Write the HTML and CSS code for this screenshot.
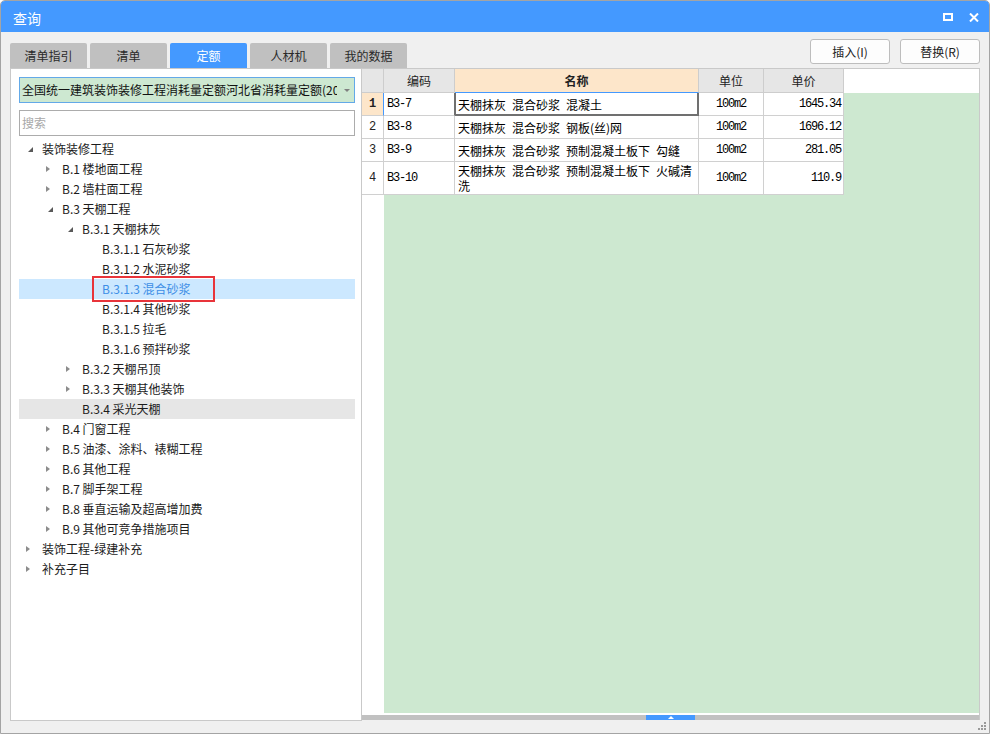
FILE: index.html
```html
<!DOCTYPE html>
<html lang="zh-CN">
<head>
<meta charset="utf-8">
<title>查询</title>
<link rel="stylesheet" href="styles.css">
</head>
<body>
<div class="window">
  <div class="titlebar">
    <span class="title">查询</span>
    <div class="win-btns">
      <svg width="10" height="8" viewBox="0 0 10 8"><rect x="1" y="1" width="8" height="6" fill="none" stroke="#fff" stroke-width="2"/></svg>
      <svg width="10" height="9" viewBox="0 0 10 9"><path d="M1 0.5 L9 8.5 M9 0.5 L1 8.5" stroke="#fff" stroke-width="2" fill="none"/></svg>
    </div>
  </div>
  <div class="toolbar">
    <div class="tabs">
      <div class="tab">清单指引</div>
      <div class="tab">清单</div>
      <div class="tab active">定额</div>
      <div class="tab">人材机</div>
      <div class="tab">我的数据</div>
    </div>
    <div class="actions">
      <button class="btn">插入(I)</button>
      <button class="btn">替换(R)</button>
    </div>
  </div>
  <div class="main">
    <div class="left-panel">
      <div class="combo"><span class="combo-text">全国统一建筑装饰装修工程消耗量定额河北省消耗量定额(2012)</span><span class="combo-arrow"></span></div>
      <div class="search">搜索</div>
      <div class="tree">
        <div class="node l0"><span class="tg open"></span><span>装饰装修工程</span></div>
        <div class="node l1"><span class="tg closed"></span><span>B.1 楼地面工程</span></div>
        <div class="node l1"><span class="tg closed"></span><span>B.2 墙柱面工程</span></div>
        <div class="node l1"><span class="tg open"></span><span>B.3 天棚工程</span></div>
        <div class="node l2"><span class="tg open"></span><span>B.3.1 天棚抹灰</span></div>
        <div class="node l3"><span class="tg"></span><span>B.3.1.1 石灰砂浆</span></div>
        <div class="node l3"><span class="tg"></span><span>B.3.1.2 水泥砂浆</span></div>
        <div class="node l3 selected"><span class="tg"></span><span>B.3.1.3 混合砂浆</span><span class="mark"></span></div>
        <div class="node l3"><span class="tg"></span><span>B.3.1.4 其他砂浆</span></div>
        <div class="node l3"><span class="tg"></span><span>B.3.1.5 拉毛</span></div>
        <div class="node l3"><span class="tg"></span><span>B.3.1.6 预拌砂浆</span></div>
        <div class="node l2"><span class="tg closed"></span><span>B.3.2 天棚吊顶</span></div>
        <div class="node l2"><span class="tg closed"></span><span>B.3.3 天棚其他装饰</span></div>
        <div class="node l2 hover"><span class="tg"></span><span>B.3.4 采光天棚</span></div>
        <div class="node l1"><span class="tg closed"></span><span>B.4 门窗工程</span></div>
        <div class="node l1"><span class="tg closed"></span><span>B.5 油漆、涂料、裱糊工程</span></div>
        <div class="node l1"><span class="tg closed"></span><span>B.6 其他工程</span></div>
        <div class="node l1"><span class="tg closed"></span><span>B.7 脚手架工程</span></div>
        <div class="node l1"><span class="tg closed"></span><span>B.8 垂直运输及超高增加费</span></div>
        <div class="node l1"><span class="tg closed"></span><span>B.9 其他可竞争措施项目</span></div>
        <div class="node l0"><span class="tg closed"></span><span>装饰工程-绿建补充</span></div>
        <div class="node l0"><span class="tg closed"></span><span>补充子目</span></div>
      </div>
    </div>
    <div class="right-panel">
      <div class="ghead">
        <div class="hc c0"></div>
        <div class="hc c1">编码</div>
        <div class="hc c2 hl">名称</div>
        <div class="hc c3">单位</div>
        <div class="hc c4">单价</div>
      </div>
      <div class="gbody">
        <div class="rh">
          <div class="rhc r1 cur">1</div>
          <div class="rhc r1">2</div>
          <div class="rhc r1">3</div>
          <div class="rhc r4">4</div>
        </div>
        <div class="data">
          <div class="drow r1">
            <div class="dc c1 code focus-left">B3-7</div>
            <div class="dc c2 name focus">天棚抹灰 混合砂浆 混凝土</div>
            <div class="dc c3 unit">100m2</div>
            <div class="dc c4 price">1645.34</div>
          </div>
          <div class="drow r1">
            <div class="dc c1 code">B3-8</div>
            <div class="dc c2 name">天棚抹灰 混合砂浆 钢板(丝)网</div>
            <div class="dc c3 unit">100m2</div>
            <div class="dc c4 price">1696.12</div>
          </div>
          <div class="drow r1">
            <div class="dc c1 code">B3-9</div>
            <div class="dc c2 name">天棚抹灰 混合砂浆 预制混凝土板下 勾缝</div>
            <div class="dc c3 unit">100m2</div>
            <div class="dc c4 price">281.05</div>
          </div>
          <div class="drow r4">
            <div class="dc c1 code">B3-10</div>
            <div class="dc c2 name">天棚抹灰 混合砂浆 预制混凝土板下 火碱清洗</div>
            <div class="dc c3 unit">100m2</div>
            <div class="dc c4 price">110.9</div>
          </div>
        </div>
      </div>
      <div class="gap"></div>
      <div class="hscroll"><div class="thumb"><span class="thumb-arrow"></span></div></div>
    </div>
  </div>
  <svg class="grip" width="8" height="8" viewBox="0 0 8 8">
    <rect x="6" y="0" width="2" height="2"/>
    <rect x="3" y="3" width="2" height="2"/>
    <rect x="6" y="3" width="2" height="2"/>
    <rect x="0" y="6" width="2" height="2"/>
    <rect x="3" y="6" width="2" height="2"/>
    <rect x="6" y="6" width="2" height="2"/>
  </svg>
</div>
</body>
</html>
```
FILE: styles.css
```css
* { box-sizing: border-box; }
html, body { margin: 0; padding: 0; }
body {
  width: 990px;
  height: 734px;
  overflow: hidden;
  background: #fff;
  font-family: "Noto Sans CJK SC", "Noto Sans", sans-serif;
  font-size: 12px;
  color: #1c1c1c;
}
.window {
  position: relative;
  width: 990px;
  height: 734px;
  border: 1px solid #a4a4a4;
  border-radius: 5px 5px 0 0;
  background: #f0f0f0;
  overflow: hidden;
  display: flex;
  flex-direction: column;
}
.titlebar {
  height: 31px;
  flex: none;
  background: #4499ff;
  display: flex;
  align-items: center;
  padding: 0 10px 0 12px;
}
.title {
  flex: 1;
  color: #fff;
  font-size: 14px;
  line-height: 20px;
  padding-top: 3px;
}
.win-btns {
  display: flex;
  align-items: center;
  gap: 16px;
  padding-top: 1px;
}
.win-btns svg { display: block; }

.toolbar {
  height: 36px;
  flex: none;
  display: flex;
  justify-content: space-between;
  padding: 0 9px;
}
.tabs {
  display: flex;
  gap: 3px;
  align-self: flex-end;
}
.tab {
  width: 77px;
  height: 25px;
  background: #c0c0c0;
  border-radius: 2px 2px 0 0;
  text-align: center;
  line-height: 25px;
  color: #2a2a2a;
}
.tab.active { background: #4499ff; color: #fff; }
.actions {
  display: flex;
  gap: 10px;
  padding-top: 7px;
}
.btn {
  width: 80px;
  height: 25px;
  border: 1px solid #bdbdbd;
  border-radius: 3px;
  background: #fdfdfd;
  font: inherit;
  color: #222;
  padding: 0;
}

.main {
  display: flex;
  align-items: flex-start;
  padding: 0 9px;
}
.left-panel {
  width: 352px;
  height: 653px;
  flex: none;
  border: 1px solid #c9c9c9;
  background: #fff;
  padding: 8px 6px 0 8px;
}
.combo {
  height: 26px;
  border: 1px solid #63a9e8;
  background: #cde8d1;
  display: flex;
  align-items: center;
  padding: 0 4px 0 2px;
}
.combo-text {
  flex: 1;
  overflow: hidden;
  white-space: nowrap;
  line-height: 24px;
  color: #111;
  margin-right: 7px;
}
.combo-arrow {
  width: 0;
  height: 0;
  border-top: 3px solid #808080;
  border-left: 3px solid transparent;
  border-right: 3px solid transparent;
}
.search {
  margin-top: 7px;
  height: 26px;
  border: 1px solid #acacac;
  background: #fff;
  padding-left: 2px;
  line-height: 24px;
  color: #a8a8a8;
}
.tree { margin-top: 3px; }
.node {
  position: relative;
  height: 20px;
  display: flex;
  align-items: center;
  white-space: nowrap;
  line-height: 20px;
}
.node.l0 { padding-left: 7px; }
.node.l1 { padding-left: 27px; }
.node.l2 { padding-left: 47px; }
.node.l3 { padding-left: 67px; }
.node.selected { background: #cce8ff; color: #3d8ee6; }
.node.hover { background: #e6e6e6; }
.tg {
  position: relative;
  flex: none;
  width: 16px;
  height: 20px;
}
.tg.closed::before {
  content: "";
  position: absolute;
  left: 0;
  top: 7px;
  border-left: 4px solid #8c8c8c;
  border-top: 3px solid transparent;
  border-bottom: 3px solid transparent;
}
.tg.open::before {
  content: "";
  position: absolute;
  left: 2px;
  top: 8px;
  border-right: 5px solid #595959;
  border-top: 5px solid transparent;
}
.mark {
  position: absolute;
  left: 73px;
  top: -3px;
  width: 123px;
  height: 26px;
  border: 2px solid #e8343a;
}

.right-panel {
  width: 618px;
  height: 652px;
  flex: none;
  border-top: 1px solid #c9c9c9;
  border-right: 1px solid #c9c9c9;
  background: #fff;
  display: flex;
  flex-direction: column;
}
.ghead {
  height: 24px;
  flex: none;
  display: flex;
}
.hc {
  height: 24px;
  border-right: 1px solid #cdcdcd;
  border-bottom: 1px solid #cdcdcd;
  background: #e6e6e6;
  display: flex;
  align-items: center;
  justify-content: center;
  color: #222;
}
.hc.hl { background: #fde6ca; font-weight: 700; border-bottom-color: #4499ff; }
.c0 { width: 22px; flex: none; }
.c1 { width: 71px; flex: none; }
.c2 { width: 244px; flex: none; }
.c3 { width: 65px; flex: none; }
.c4 { width: 80px; flex: none; }

.gbody {
  flex: 1;
  display: flex;
  min-height: 0;
}
.rh { width: 22px; flex: none; background: #fff; }
.rhc {
  border-right: 1px solid #d0d0d0;
  border-bottom: 1px solid #d0d0d0;
  display: flex;
  align-items: center;
  justify-content: center;
  font-family: "Liberation Mono", monospace;
  font-size: 12px;
  color: #222;
}
.rhc.cur { background: #fde6ca; font-weight: 700; border-right-color: #4499ff; }
.r1 { height: 23px; }
.r4 { height: 33px; }
.data {
  flex: 1;
  background: #cde8d0;
}
.drow { display: flex; width: 460px; }
.dc {
  border-right: 1px solid #d0d0d0;
  border-bottom: 1px solid #d0d0d0;
  background: #fff;
  display: flex;
  align-items: center;
  color: #000;
}
.code, .unit, .price {
  font-family: "Liberation Mono", monospace;
  font-size: 12px;
  letter-spacing: -1.2px;
}
.code { padding-left: 3px; }
.unit { justify-content: center; }
.price { justify-content: flex-end; padding-right: 2px; }
.name {
  padding: 0 3px;
  line-height: 15px;
  word-spacing: 3.3px;
}
.focus-left { border-right-color: #707070; }
.focus {
  border-right-color: #707070;
  border-bottom-color: #707070;
  box-shadow: inset 1px 0 0 #707070, inset -1px 0 0 #707070, inset 0 -1px 0 #707070;
}

.gap { height: 2px; flex: none; background: #fff; }
.hscroll {
  height: 5px;
  flex: none;
  background: #c1c1c1;
  display: flex;
}
.thumb {
  margin-left: 284px;
  width: 49px;
  height: 5px;
  background: #4499ff;
  display: flex;
  align-items: center;
  justify-content: center;
}
.thumb-arrow {
  width: 0;
  height: 0;
  border-bottom: 3px solid #fff;
  border-left: 3px solid transparent;
  border-right: 3px solid transparent;
}
.grip {
  position: absolute;
  right: 3px;
  bottom: 3px;
  fill: #9a9a9a;
}
```
